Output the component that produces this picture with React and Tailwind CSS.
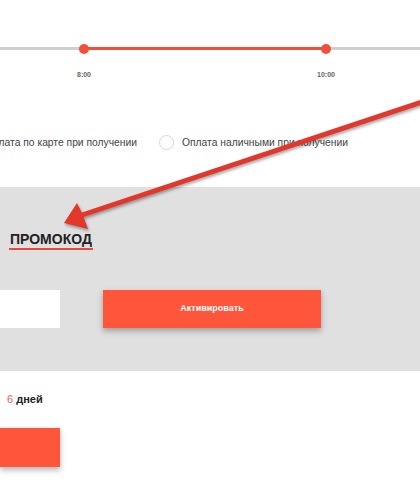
export default function App() {
    return (
        <div className="relative w-[420px] h-[502px] overflow-hidden bg-white font-['Liberation_Sans',Arial,sans-serif]">
            {/* delivery time slider + payment */}
            <div className="h-[187px] flex flex-col">
                <div className="relative mt-[47px] h-[3px] bg-[#cfcfcf]">
                    <div className="absolute left-[84px] w-[242px] top-0 h-[3px] bg-[#f0503a]" />
                    <div className="absolute left-[79px] top-[-3.5px] w-[10px] h-[10px] rounded-full bg-[#f0503a]" />
                    <div className="absolute left-[321px] top-[-3.5px] w-[10px] h-[10px] rounded-full bg-[#f0503a]" />
                </div>
                <div className="flex mt-[21px] text-[7px] font-bold text-[#666] leading-none">
                    <span className="w-[168px] text-center">8:00</span>
                    <span className="ml-[74px] w-[168px] text-center">10:00</span>
                </div>
                <div className="flex items-center mt-[57px] text-[10.3px] text-[#444] whitespace-nowrap">
                    <div className="w-[137px] flex justify-end">
                        <span>Оплата по карте при получении</span>
                    </div>
                    <span className="ml-[22px] w-[15px] h-[15px] rounded-full border border-[#d8d8d8] bg-white" />
                    <span className="ml-[8px]">Оплата наличными при получении</span>
                </div>
            </div>

            {/* promo code */}
            <div className="h-[184px] bg-[#e0e0e0] flex flex-col">
                <div className="mt-[45px] ml-[10px] self-start">
                    <div className="text-[14px] font-bold text-[#222] leading-none">ПРОМОКОД</div>
                    <div className="mt-[2px] h-[2px] -mx-[1px] bg-[#e8483a]" />
                </div>
                <div className="flex mt-[40px] h-[38px]">
                    <div className="w-[60px] bg-white" />
                    <button className="ml-[43px] w-[218px] bg-[#ff553a] text-white text-[9px] font-bold shadow-[0_3px_6px_rgba(0,0,0,0.3)]">
                        Активировать
                    </button>
                </div>
            </div>

            {/* delivery term */}
            <div className="flex flex-col">
                <div className="mt-[23px] ml-[7px] text-[11px] leading-none">
                    <span className="text-[#e8625a]">6</span>{" "}
                    <span className="font-bold text-[#222]">дней</span>
                </div>
                <div className="mt-[23px] w-[60px] h-[39px] bg-[#ff553a] shadow-[0_3px_6px_rgba(0,0,0,0.3)]" />
            </div>

            {/* annotation arrow */}
            <svg
                className="absolute inset-0 pointer-events-none"
                width="420"
                height="502"
                viewBox="0 0 420 502"
                style={{ filter: "drop-shadow(1px 2px 1.5px rgba(0,0,0,0.35))" }}
            >
                <path d="M425 101 L82 215" stroke="#e3372b" strokeWidth="5" strokeLinecap="round" fill="none" />
                <path d="M64 223 L77 203 L82 213 L88 229 Z" fill="#e3372b" />
            </svg>
        </div>
    );
}
